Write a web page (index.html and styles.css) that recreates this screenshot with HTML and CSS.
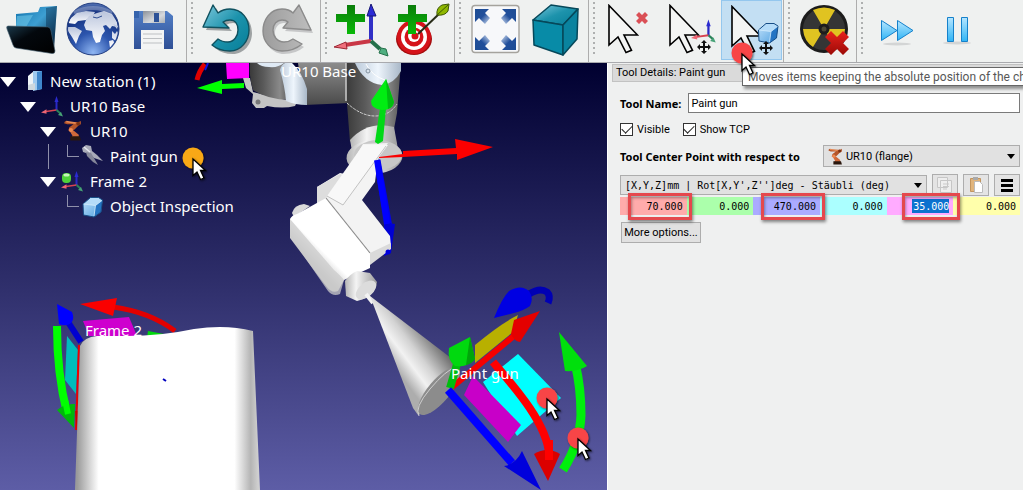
FILE: index.html
```
<!DOCTYPE html>
<html lang="en">
<head>
<meta charset="utf-8">
<title>Station editor</title>
<link rel="stylesheet" href="styles.css">
</head>
<body>
<svg class="defs" aria-hidden="true">
  <defs>
    <linearGradient id="gSky" x1="0" y1="0" x2="0" y2="1"><stop offset="0" stop-color="#000030"/><stop offset=".5" stop-color="#2d2d69"/><stop offset="1" stop-color="#5d5da6"/></linearGradient>
    <linearGradient id="gFolder" x1="0" y1="0" x2="1" y2="1"><stop offset="0" stop-color="#1273ad"/><stop offset=".45" stop-color="#3d9fd2"/><stop offset="1" stop-color="#052038"/></linearGradient>
    <linearGradient id="gFront" x1="0" y1="0" x2="1" y2="1"><stop offset="0" stop-color="#1b3a4c"/><stop offset=".4" stop-color="#03080d"/><stop offset="1" stop-color="#000"/></linearGradient>
    <radialGradient id="gGlobe" cx=".5" cy=".95" r=".95"><stop offset="0" stop-color="#8fb6f2"/><stop offset=".4" stop-color="#2c55ad"/><stop offset=".8" stop-color="#15327f"/><stop offset="1" stop-color="#5272b4"/></radialGradient>
    <linearGradient id="gLand" x1="0" y1="0" x2="0" y2="1"><stop offset="0" stop-color="#b9c4dc"/><stop offset="1" stop-color="#fff"/></linearGradient>
    <linearGradient id="gDisk" x1="0" y1="0" x2="0" y2="1"><stop offset="0" stop-color="#527fc6"/><stop offset="1" stop-color="#2f5096"/></linearGradient>
    <linearGradient id="gMetal" x1="0" y1="0" x2="1" y2="1"><stop offset="0" stop-color="#8b9098"/><stop offset=".6" stop-color="#d6d9dd"/><stop offset="1" stop-color="#aaafb5"/></linearGradient>
    <linearGradient id="gTeal" x1="0" y1="0" x2="1" y2="1"><stop offset="0" stop-color="#7cc7dc"/><stop offset=".5" stop-color="#1d93ac"/><stop offset="1" stop-color="#067e98"/></linearGradient>
    <linearGradient id="gGray" x1="0" y1="0" x2="1" y2="0"><stop offset="0" stop-color="#9c9c9c"/><stop offset="1" stop-color="#bdbdbd"/></linearGradient>
    <linearGradient id="gPlus" x1="0" y1="0" x2="0" y2="1"><stop offset="0" stop-color="#0a7d0a"/><stop offset="1" stop-color="#08b908"/></linearGradient>
    <linearGradient id="gBlueUp" x1="0" y1="0" x2="1" y2="1"><stop offset="0" stop-color="#1d4c93"/><stop offset=".5" stop-color="#214f9b"/><stop offset="1" stop-color="#d9e4f5"/></linearGradient>
    <linearGradient id="gCube" x1="0" y1="0" x2="1" y2="1"><stop offset="0" stop-color="#c3e3fb"/><stop offset="1" stop-color="#4d9fe0"/></linearGradient>
    <linearGradient id="gPlay" x1="0" y1="0" x2="0" y2="1"><stop offset="0" stop-color="#b7e6ff"/><stop offset="1" stop-color="#2fb4f5"/></linearGradient>
    <linearGradient id="gRedX" x1="0" y1="0" x2="0" y2="1"><stop offset="0" stop-color="#e8221d"/><stop offset="1" stop-color="#9b0a06"/></linearGradient>
    <linearGradient id="gArm" x1="0" y1="0" x2="1" y2="0"><stop offset="0" stop-color="#3a3a3a"/><stop offset=".35" stop-color="#5b5b5b"/><stop offset=".75" stop-color="#8a8a8a"/><stop offset="1" stop-color="#565656"/></linearGradient>
    <linearGradient id="gArmH" x1="0" y1="0" x2="0" y2="1"><stop offset="0" stop-color="#8c8c8c"/><stop offset="1" stop-color="#4a4a4a"/></linearGradient>
    <linearGradient id="gRing" x1="0" y1="0" x2="1" y2="0"><stop offset="0" stop-color="#bccbdb"/><stop offset=".5" stop-color="#eef5fc"/><stop offset="1" stop-color="#a9b8c8"/></linearGradient>
    <linearGradient id="gFlange" x1="0" y1="0" x2="1" y2="0"><stop offset="0" stop-color="#b5b5b5"/><stop offset=".35" stop-color="#f4f4f4"/><stop offset="1" stop-color="#9c9c9c"/></linearGradient>
    <linearGradient id="gBox" gradientUnits="userSpaceOnUse" x1="310" y1="262" x2="322" y2="250"><stop offset="0" stop-color="#c2c2c2"/><stop offset="1" stop-color="#fff"/></linearGradient>
    <linearGradient id="gCone" gradientUnits="userSpaceOnUse" x1="400" y1="375" x2="440" y2="345"><stop offset="0" stop-color="#adadad"/><stop offset=".3" stop-color="#f2f2f2"/><stop offset=".55" stop-color="#d2d2d2"/><stop offset="1" stop-color="#6d6d6d"/></linearGradient>
    <linearGradient id="gBody" gradientUnits="userSpaceOnUse" x1="77" y1="0" x2="258" y2="0"><stop offset="0" stop-color="#9a9a9a"/><stop offset=".12" stop-color="#fff"/><stop offset=".87" stop-color="#fff"/><stop offset=".96" stop-color="#b4b4b4"/><stop offset="1" stop-color="#cfcfcf"/></linearGradient>
    <filter id="soft" x="-50%" y="-50%" width="200%" height="200%"><feDropShadow dx="1" dy="1" stdDeviation="1" flood-opacity=".6"/></filter>
    <clipPath id="land"><circle cx="93" cy="29" r="25"/></clipPath>
    <symbol id="pick" viewBox="0 0 34 40" overflow="visible">
      <circle cx="13" cy="13" r="10.5" filter="url(#soft)"/>
      <path d="M13 14v16.500l4-3.500 3.500 7.500 3.500-1.500-3.500-7.500h5z" fill="#fff" stroke="#000" stroke-width="1.300" filter="url(#soft)"/>
    </symbol>
    <symbol id="arrow" viewBox="0 0 32 50"><path d="M2 1.500V41l9-8 8 15.500 5.500-2.200L17 31H30.500z" fill="#f4f5f4" stroke="#000" stroke-width="1.600"/></symbol>
    <symbol id="move" viewBox="0 0 14 14"><path d="M7 0l3 3H8v3h3V4l3 3-3 3V8H8v3h2l-3 3-3-3h2V8H3v2L0 7l3-3v2h3V3H4z" fill="#111"/></symbol>
    <symbol id="axes" viewBox="0 0 24 24"><path d="M15.500 14V5" stroke="#2929c4" stroke-width="2"/><path d="M15.500 0l2 6h-4z" fill="#2b2bd0"/><path d="M15.500 14L5 15.500" stroke="#d84352" stroke-width="1.600"/><path d="M0 16.500l5.500-3.200v4.500z" fill="#ee6674"/><path d="M15.500 14l4 3.500" stroke="#2b8159" stroke-width="2"/><path d="M22 20.500l-5-1.500 3-3z" fill="#46a276"/></symbol>
    <symbol id="robot" viewBox="0 0 17 20"><path d="M1 1l2 1h11l2-1v3l-2 1-4 4-3 2-3-1 1-3 4-3H3L0 3z" fill="#b5552a"/><path d="M2 1.500l9 1.500" stroke="#e68a55" stroke-width="1.500"/><path d="M5 10l4 0 5 4 0 3H7l1-2z" fill="#d0693a"/><circle cx="6.500" cy="9.500" r="2" fill="#ee8a52"/><circle cx="13.500" cy="3.500" r="1.800" fill="#7c3213"/><path d="M6 15.500h9l1 4H6z" fill="#2a170e"/></symbol>
    <symbol id="cube" viewBox="0 0 22 22"><path d="M1.500 8L9 1.500h8l4 2.500-1.500 12-7 5L2 19z" fill="url(#gCube)"/><path d="M14 9.500l7-5.500-1.500 12-7 5z" fill="#2474c3"/><path d="M2 8l7-6h8l3.500 2L14 9.500z" fill="#b5dcf9"/><path d="M1.500 8L9 1.500h8l4 2.500-1.500 12-7 5L2 19z" fill="none" stroke="#174d86"/><path d="M2 8l12 1.500 6.500-5M14 9.500L12.500 20" stroke="#d4ecfd" stroke-width=".8" fill="none"/></symbol>
    <symbol id="cross" viewBox="0 0 12 12"><path d="M3 0l3 3 3-3 3 3-3 3 3 3-3 3-3-3-3 3-3-3 3-3-3-3z"/></symbol>
  </defs>
</svg>
<div class="app">
  <header class="toolbar">
    <div class="group group-first">
      <button class="tool" aria-label="Open"><svg viewBox="2 0 61 60"><path d="M16 14l22-2 2-5 17-1-3 42-38-6z" fill="url(#gFolder)"/><path d="M17 16l16-1-7 12H16z" fill="#6cc6e8" opacity=".6"/><path d="M46 8l11-2-3 42-8-4z" fill="#031f3c" opacity=".4"/><path d="M8 26l40 1q3 1 3 4l4 20q0 3-3 2.500L16 48q-2 0-3-3L7 29q-1-3 1-3z" fill="url(#gFront)" stroke="#456070" stroke-width=".6"/></svg></button>
      <button class="tool" aria-label="Online library"><svg viewBox="63 0 61 60"><circle cx="93" cy="29" r="26" fill="url(#gGlobe)" stroke="#243f82"/><g clip-path="url(#land)" fill="url(#gLand)"><path d="M71 18l6-5 9-2 9 1-2 4-7 4-8 1-3 3-7-1z"/><path d="M67 27l8 0 7 4-3 5-3 8-4-7-4-6z"/><path d="M86 20l3-4 8-3 7-2 8 3 5 8 1 5-6-1-2 3-4-4-3 1 2 5-3 4-2 7-4 1-3-6-1-6-6-1-2-5z"/><path d="M112 31l3 3 2-3 2 3-2 8-5-4zM109 41l4-1 2 4-5 4zM113 24l5 2-1 3z"/></g><path d="M93 17l4 1 5-2" stroke="#2c4c91" fill="none"/><path d="M74 13q19-10 38 0" stroke="#fff" stroke-width="4" opacity=".25" fill="none"/></svg></button>
      <button class="tool" aria-label="Save"><svg viewBox="124 0 61 60"><path d="M134 11h33l6 5v33h-39z" fill="url(#gDisk)"/><path d="M134 11h5v7h-5z" fill="#3564ad"/><path d="M143 11h22v12h-22z" fill="url(#gMetal)"/><path d="M154 13h5v9h-5z" fill="#2c5197"/><path d="M141 30h23v19h-23z" fill="#f3f4f4"/><path d="M143 34h19M143 38.500h19M143 43h19" stroke="#bdc0c3"/></svg></button>
    </div>
    <div class="group">
      <button class="tool" aria-label="Undo"><svg viewBox="197 0 61 60"><path d="M213 5l5 8q5-4 12-4c12 0 19 10 19 21s-8 21-19 21q-11 0-18-6l6-6q4 3 10 3c6 0 10-6 10-12s-3-10-8-10q-4 0-7 2l6 6-26-1z" fill="#8a8e90" opacity=".8" transform="translate(3 3)"/><path d="M213 5l5 8q5-4 12-4c12 0 19 10 19 21s-8 21-19 21q-11 0-18-6l6-6q4 3 10 3c6 0 10-6 10-12s-3-10-8-10q-4 0-7 2l6 6-26-1z" fill="url(#gTeal)" stroke="#10515f" stroke-width="1.400" stroke-linejoin="round"/></svg></button>
      <button class="tool" aria-label="Redo"><svg viewBox="258 0 61 60"><path d="M299 5l-6 8q-4-4-11-4c-12 0-19 11-19 22s8 20 19 20q12 0 20-7l-9-5q-4 3-9 3c-7 0-11-6-11-12s4-10 9-10q4 0 6 2l-5 6 28 2z" fill="#bbbdbe" opacity=".8" transform="translate(2 3)"/><path d="M299 5l-6 8q-4-4-11-4c-12 0-19 11-19 22s8 20 19 20q12 0 20-7l-9-5q-4 3-9 3c-7 0-11-6-11-12s4-10 9-10q4 0 6 2l-5 6 28 2z" fill="url(#gGray)" stroke="#8b8b8b" stroke-width="1.400" stroke-linejoin="round"/></svg></button>
    </div>
    <div class="group">
      <button class="tool" aria-label="Add reference frame"><svg viewBox="331 0 61 60"><path d="M371 40V16" stroke="#3030c6" stroke-width="4"/><path d="M371 4l5 12h-9z" fill="#2b2bd6" stroke="#181876"/><path d="M371 41l-26 4" stroke="#c93746" stroke-width="4"/><path d="M334 47l12-5 1 7z" fill="#f0707c" stroke="#9b2632"/><path d="M371 41l9 8" stroke="#24714a" stroke-width="4"/><path d="M388 56l-9-3 2-5 5 1z" fill="#4fae80" stroke="#24714a"/><path d="M347 5h8v9h10v8h-10v12h-8V22h-11v-8h11z" fill="url(#gPlus)"/></svg></button>
      <button class="tool" aria-label="Add target"><svg viewBox="392 0 61 60"><ellipse cx="414" cy="39" rx="18" ry="16" fill="#a40d0d"/><circle cx="414" cy="37" r="17" fill="#d5131a"/><circle cx="414" cy="37" r="13" fill="#fff"/><circle cx="414" cy="37" r="9.500" fill="#d5131a"/><circle cx="414" cy="36" r="6" fill="#fff"/><circle cx="415" cy="36" r="3.500" fill="#d5131a"/><path d="M418 34l22-21" stroke="#282c18" stroke-width="2"/><path d="M437 15q-1-7 5-10l7-1-1 7q-3 5-11 4z" fill="#8fb800" stroke="#3e5804"/><path d="M437 15l11-10" stroke="#3e5804"/><path d="M408 5h8v9h11v8h-11v12h-8V22h-10v-8h10z" fill="url(#gPlus)"/></svg></button>
    </div>
    <div class="group">
      <button class="tool" aria-label="Fit all"><svg viewBox="465 0 61 60"><rect x="472" y="5.500" width="47" height="47" rx="3" fill="#f7f8fa" stroke="#a5a39d" stroke-width="1.400"/><g id="corner"><path d="M475 9h14l-4 4 5 5-5 6-6-6-4 4z" fill="url(#gBlueUp)"/></g><use href="#corner" transform="matrix(-1 0 0 1 991 0)"/><use href="#corner" transform="matrix(1 0 0 -1 0 59)"/><use href="#corner" transform="matrix(-1 0 0 -1 991 59)"/></svg></button>
      <button class="tool" aria-label="Isometric view"><svg viewBox="526 0 61 60"><g stroke="#06485a" stroke-width="1.500" stroke-linejoin="round"><path d="M533 20l18-15 27 4-15 16z" fill="url(#gTeal)"/><path d="M533 20l30 5v30l-29-10z" fill="#088ba7"/><path d="M563 25l15-16-1 30-14 16z" fill="#0a839f"/></g></svg></button>
    </div>
    <div class="group">
      <button class="tool" aria-label="Select none"><svg viewBox="599 0 61 60"><use href="#arrow" x="607" y="4" width="32" height="50"/><use href="#cross" x="636" y="12" width="12" height="12" fill="#da5056"/></svg></button>
      <button class="tool" aria-label="Move reference frame"><svg viewBox="660 0 61 60"><use href="#arrow" x="668" y="4" width="32" height="50"/><use href="#axes" x="691" y="19" width="27" height="28"/><use href="#move" x="697" y="40" width="14" height="14"/></svg></button>
      <button class="tool tool-active" aria-label="Move object" aria-describedby="tip"><svg viewBox="721 0 61 60"><use href="#arrow" x="730" y="5" width="32" height="50"/><use href="#cube" x="757" y="22" width="22" height="22"/><use href="#move" x="759" y="41" width="14" height="14"/></svg></button>
    </div>
    <div class="group">
      <button class="tool" aria-label="Disable collision checking"><svg viewBox="794 0 61 60"><circle cx="824" cy="29" r="24" fill="#1c1c1c"/><circle cx="824" cy="29" r="21" fill="#353535"/><path d="M824 29L813 10q11-5 22 0zM824 29h-21q1 12 10 18zM824 29h21q-1 12-10 18z" fill="#e0c321"/><circle cx="824" cy="29" r="5.500" fill="#1c1c1c"/><circle cx="824" cy="29" r="2.500" fill="#4b4835"/><use href="#cross" x="825" y="31" width="24" height="24" fill="url(#gRedX)"/></svg></button>
    </div>
    <div class="group group-last">
      <button class="tool" aria-label="Fast simulation"><svg viewBox="867 0 61 60"><ellipse cx="897" cy="44" rx="14" ry="1.500" fill="#d3d5d5"/><g fill="url(#gPlay)" stroke="#1581cb"><path d="M881.500 20.500L897 30.500l-15.500 10z"/><path d="M897.500 20.500l15.500 10-15.500 10z"/></g></svg></button>
      <button class="tool" aria-label="Pause"><svg viewBox="928 0 61 60"><ellipse cx="957" cy="43" rx="14" ry="1.500" fill="#d3d5d5"/><g fill="url(#gPlay)" stroke="#1581cb"><path d="M947.500 17.500h6v24h-6zM961.500 17.500h6v24h-6z"/></g></svg></button>
    </div>
  </header>

  <main class="workspace">
    <section class="viewport">
      <svg class="scene" viewBox="0 63 607 427" preserveAspectRatio="xMinYMin slice" role="img" aria-label="3D view of the station">
        <rect x="0" y="63" width="607" height="427" fill="url(#gSky)"/>
        <!-- robot base frame -->
        <path d="M197 80q2-9 8-16" stroke="#e00000" stroke-width="5" fill="none"/><path d="M205 70l3-7" stroke="#1212e0" stroke-width="2"/>
        <path d="M226 63h23v15l-22 1z" fill="#f0f"/>
        <path d="M197 88l25-8v4l22-1v5l-22 1v5z" fill="#0f0"/>
        <!-- robot arm -->
        <path d="M243 78h7l3 14 24 6 20 4-2 4q-12 3-28 0l-3 2h-8l-4-5 1-9-7-6z" fill="#c4c4c4"/><circle cx="258" cy="102" r="2.500" fill="#777"/>
        <path d="M250 63h38l2 37q-24-1-37-10-4-12-3-27z" fill="url(#gArm)"/>
        <path d="M257 63h27q-6 5-15 4-8 0-12-4z" fill="#dfeaf5"/>
        <path d="M298 63h52v40l-46 2z" fill="url(#gArmH)"/>
        <path d="M280 70q1-5 5-7h7q10 9 15 26l0 16q-12 0-21-4-1-14-6-31z" fill="url(#gRing)"/>
        <path d="M346 63h55l-4 50-3 16q-18-8-44 13l-3-38z" fill="url(#gArm)"/>
        <path d="M347 103q14 13 28 13 14 0 22-12" stroke="#d0d0d0" fill="none" stroke-width="1" stroke-dasharray="3 1"/>
        <path d="M346 63v38" stroke="#c8c8c8" stroke-width="1.500"/>
        <path d="M355 63h46v8q-7 13-19 14-18-2-27-22z" fill="url(#gRing)"/><path d="M366 64q6 12 19 16" stroke="#fff" fill="none"/>
        <path d="M350 140q18-20 44-13l4 22-46 2z" fill="url(#gFlange)"/>
        <ellipse cx="374.500" cy="157" rx="28" ry="17" fill="url(#gFlange)" transform="rotate(-3 374 157)"/>
        <ellipse cx="378" cy="155" rx="24" ry="15" fill="#c7c7c7"/>
        <path d="M377 160l12 67" stroke="#00e" stroke-width="7"/>
        <path d="M384 222l11 2-4 29-7 3z" fill="#0000d4"/>
        <!-- tool body -->
        <path d="M378 158l-3 24-13 18 28 36 1 10-21 18-53-54v-23l23-14 5 1 18-30 25-1z" fill="#f3f3f3"/>
        <path d="M317 187l23-13 4 2-18 22-9 10z" fill="#ddd"/>
        <path d="M363 145h25l-45 60-16-9z" fill="#f8f8f8"/><path d="M386 146l-43 59-16-9" fill="none" stroke="#aaa" stroke-width=".7"/>
        <path d="M292 213q2-8 12-9l6 2-16 11z" fill="#dadada"/>
        <path d="M290 219q2-4 7-5l29-16 44 54v16l-26 12-6 11q-6 3-12-5l-36-48z" fill="url(#gBox)"/>
        <path d="M290 219l44 51q8 7 10 10l-4 14q-7 3-12-3l-38-55z" fill="#cbcbcb" opacity=".75"/>
        <path d="M326 198l44 55" stroke="#8b8b8b" stroke-width="1.200"/><path d="M370 253l21-10v6l-21 16z" fill="#dadada"/>
        <circle cx="388" cy="252" r="2.500" fill="#00d"/>
        <path d="M345 281q5-7 12-10l13 2 7 9q-2 15-20 19l-11-5z" fill="url(#gFlange)"/><ellipse cx="366" cy="290" rx="12" ry="7" fill="#dcdcdc" transform="rotate(-40 366 290)"/>
        <path d="M366 294l7 9" stroke="#f3f3f3" stroke-width="4"/>
        <!-- spray cone -->
        <path d="M370 296l81 62 8 12-30 40-11 5-5-7z" fill="url(#gCone)"/>
        <ellipse cx="439" cy="391" rx="30" ry="11" fill="#8c8c8c" transform="rotate(-50 439 391)"/>
        <path d="M419 416q-5-8 11-27t26-22" fill="none" stroke="#cfcfcf" stroke-width="1"/>
        <!-- robot flange frame -->
        <path d="M379 157l24-3v-3l53-3-1-9 38 8-36 13v-6l-54 3-24 1z" fill="#fa0000"/>
        <path d="M377 160l10 64" stroke="#00f" stroke-width="6"/><path d="M375 142l5-34h6l-3 33-5 3z" fill="#00d916"/>
        <path d="M386 79l8 23q-1 8-12 8-11-1-11-9z" fill="#00ed12"/><path d="M386 79l8 23q-1 5-6 7z" fill="#00bc10"/>
        <!-- tool frame -->
        <path d="M518 315l-5 17-38 31v-18q25-21 43-30z" fill="#b8b000"/>
        <path d="M483 382l35-28 43 44-44 38z" fill="#0ff"/>
        <path d="M473 376l48 49-13 17-44-47z" fill="#c800c8"/>
        <path d="M451 388l64-53" stroke="#f40000" stroke-width="6"/><path d="M540 311l-20 31q-6-1-9-8l3-14z" fill="#e40000"/>
        <path d="M450 388l7-24" stroke="#00bd0e" stroke-width="8"/><path d="M470 337l5 22q-9 9-20 7-8-6-6-18z" fill="#00d90f"/><path d="M470 337l5 22q-3 5-9 6z" fill="#00a60a"/>
        <path d="M448 390l64 73" stroke="#00f" stroke-width="8"/><path d="M541 490l-37-24q12-2 18-15z" fill="#0000dc"/>
        <path d="M529 294q11-7 18-2 4 4 1 11" fill="none" stroke="#0000b4" stroke-width="7"/><path d="M494 318q8-20 15-27 12-7 20 0 5 7 1 15-7 5-16 7z" fill="#0000e2"/>
        <path d="M493 362c17 20 54 60 56 92" fill="none" stroke="#f00" stroke-width="8"/><path d="M534 454q13-8 26 0l-12 27z" fill="#db0000"/><path d="M549 440v20" stroke="#f00" stroke-width="8"/>
        <path d="M563 470q17-27 18-55 0-28-6-52" fill="none" stroke="#00f00c" stroke-width="9"/><path d="M559 332l28 34q-9 6-22 5z" fill="#00df0c"/>
        <!-- part and its frame -->
        <path d="M83 321l46-4 8 19H89z" fill="#ce00ce"/><path d="M148 331l16 3v4h-17z" fill="#00d80c"/>
        <path d="M175 331q-25-19-62-24" fill="none" stroke="#e20000" stroke-width="5"/><path d="M80 304l37-6-4 18z" fill="#fa0000"/>
        <path d="M67 336l11 14-2 44-11-14z" fill="#00bcbc"/><path d="M79 345l-3 85" stroke="#e00" stroke-width="2"/><path d="M75 411h4l-2 20z" fill="#c00"/>
        <path d="M57 326q0 48 10 87" fill="none" stroke="#0f0" stroke-width="8"/><path d="M57 410q8-7 18-6l-1 24z" fill="#00b80c"/><path d="M65 400l3 14" stroke="#0f0" stroke-width="6"/>
        <path d="M68 322l13 20" stroke="#0000d0" stroke-width="6"/><path d="M57 304l15 8q3 7-1 11-5 4-12 1z" fill="#00f"/>
        <path d="M80 346q4-9 17-10h30q34 0 67-7 32-5 59 2l7 159H75z" fill="url(#gBody)"/>
        <path d="M163 379l3 2" stroke="#0000c0" stroke-width="2"/>
        <g class="scene-label"><text x="281" y="77">UR10 Base</text><text x="85" y="336">Frame 2</text><text x="451" y="379">Paint gun</text></g>
        <circle cx="368" cy="71" r="2" fill="none" stroke="#8291a0"/>
        <use href="#pick" x="534" y="385" width="34" height="40" fill="#f84446"/>
        <use href="#pick" x="565" y="425" width="34" height="40" fill="#f84446"/>
      </svg>

      <ul class="tree">
        <li class="row"><span class="slot"><i class="caret"></i></span><svg class="ticon" viewBox="20 69 24 24"><path d="M28 75l6-5 2 16-8 3z" fill="#eef3f7"/><path d="M33 70h9v18l-9 2z" fill="#9fcaf0"/><path d="M37 71l5-1v18l-5 1z" fill="#3f86cb"/><path d="M28 84l7-2v7h-7z" fill="#cfd8de"/></svg>New station (1)</li>
        <li class="row level-1"><span class="slot"><i class="caret"></i></span><svg class="ticon" viewBox="0 0 24 24"><use href="#axes" x="1" y="1" width="24" height="24"/></svg>UR10 Base</li>
        <li class="row level-2"><span class="slot"><i class="caret"></i></span><svg class="ticon" viewBox="0 0 24 24"><use href="#robot" x="4" y="0" width="18" height="21"/></svg>UR10</li>
        <li class="row level-3"><i class="guide"></i><span class="slot"><i class="branch"></i></span><svg class="ticon" viewBox="80 144 24 24"><path d="M82 147l4-3 5 1 1 5 5 4 6 6-9-3-5-4-6-2z" fill="#a9abb9"/><path d="M86 151l5 1 3 5 4 7-5-3-6-6z" fill="#858799"/><path d="M84 146l6 5" stroke="#e4e5ee" stroke-width="1.500"/></svg>Paint gun<svg class="marker" viewBox="0 0 34 40"><use href="#pick" width="34" height="40" fill="#f9a812"/></svg></li>
        <li class="row level-2"><span class="slot"><i class="caret"></i></span><svg class="ticon" viewBox="0 0 24 24"><use href="#axes" x="1" y="1" width="24" height="24"/><rect x="2" y="3" width="9" height="10" rx="4" fill="#4fd33a"/><ellipse cx="6.500" cy="5" rx="3" ry="1.500" fill="#c6f5bb"/></svg>Frame 2</li>
        <li class="row level-3"><span class="slot"><i class="branch"></i></span><svg class="ticon" viewBox="0 0 24 24"><use href="#cube" x="1" y="1" width="23" height="22"/></svg>Object Inspection</li>
      </ul>
    </section>

    <aside class="panel">
      <h2 class="panel-title">Tool Details: Paint gun</h2>
      <form class="form">
        <div class="line name-line"><label class="strong" for="name">Tool Name:</label><input class="text" id="name" type="text" value="Paint gun"></div>
        <div class="line checks">
          <label class="check"><input type="checkbox" checked>Visible</label>
          <label class="check"><input type="checkbox" checked>Show TCP</label>
        </div>
        <div class="line tcp-line"><label class="strong" for="flange">Tool Center Point with respect to</label>
          <span class="combo combo-flange"><select id="flange"><option>UR10 (flange)</option></select><svg viewBox="0 0 17 20"><use href="#robot" width="17" height="20"/></svg></span></div>
        <div class="line pose-line">
          <span class="combo combo-pose"><select aria-label="Pose format"><option>[X,Y,Z]mm | Rot[X,Y',Z'']deg - Stäubli (deg)</option></select></span>
          <button type="button" class="small" aria-label="Copy"><svg viewBox="0 0 20 18"><g fill="#eee" stroke="#c6c6c6"><path d="M2.500 1.500h10v10h-10zM5.500 4.500h11v12h-11z"/></g><path d="M8 8h6M8 10.500h6M8 13h4" stroke="#c9c9c9"/></svg></button>
          <button type="button" class="small" aria-label="Paste"><svg viewBox="0 0 20 18"><path d="M4.500 2.500h10v13h-10z" fill="#e0b47c" stroke="#c2955f"/><path d="M7 1h5v3H7z" fill="#aaa"/><path d="M8.500 5.500h5l3 3v8h-8z" fill="#fff" stroke="#bbb"/></svg></button>
          <button type="button" class="small" aria-label="Menu"><svg viewBox="0 0 20 18"><path d="M4 4.500h12M4 9.500h12M4 14.500h12" stroke="#000" stroke-width="3"/></svg></button>
        </div>
        <div class="pose">
          <span class="cell x framed"><input aria-label="X" value="70.000"></span>
          <span class="cell y"><input aria-label="Y" value="0.000"></span>
          <span class="cell z framed"><input aria-label="Z" value="470.000"></span>
          <span class="cell rx"><input aria-label="Rotation X" value="0.000"></span>
          <span class="cell ry framed"><input class="selected" aria-label="Rotation Y" value="35.000"></span>
          <span class="cell rz"><input aria-label="Rotation Z" value="0.000"></span>
        </div>
        <button type="button" class="more">More options...</button>
      </form>
    </aside>
  </main>
  <div class="tooltip" id="tip" role="tooltip">Moves items keeping the absolute position of the ch</div>
  <svg class="pointer" viewBox="0 0 34 40"><use href="#pick" width="34" height="40" fill="#f84446"/></svg>
</div>
</body>
</html>
```
FILE: styles.css
```
* { box-sizing: border-box; }
body { margin: 0; overflow: hidden; font-family: Roboto, "Noto Sans", sans-serif; font-size: 11px; color: #000; background: #eff0f0; }
.defs { position: absolute; width: 0; height: 0; }
.app { position: relative; display: flex; flex-direction: column; min-height: 100vh; }

.toolbar { display: flex; min-height: 63px; border-bottom: 1px solid #a9aaae; background: #eff1f0; }
.group { position: relative; display: flex; align-items: flex-start; padding: 0 1px 0 10px; border-right: 1px solid #adadad; }
.group::before { content: ""; position: absolute; left: 4px; top: 2px; bottom: 6px; width: 2px; background: repeating-linear-gradient(#aeb0b0 0 2px, #eff1f0 2px 5px); }
.group-first { padding-left: 2px; }
.group-first::before { display: none; }
.group-last { border-right: 0; }
.tool { display: block; width: 61px; height: 60px; padding: 0; border: 0; background: none; }
.tool svg { display: block; width: 61px; height: 60px; }
.tool-active { background: #c3dff3; box-shadow: inset 0 0 0 1px #94c7ee; }

.workspace { flex: 1; display: flex; }
.viewport { position: relative; flex: 1; min-width: 0; background: #5d5da6; }
.scene { position: absolute; inset: 0; width: 100%; height: 100%; }
.scene-label { font: 15px "Noto Sans", sans-serif; fill: #fff; }

.tree { position: absolute; left: 0; top: 6px; margin: 0; padding: 0; list-style: none; color: #fff; font: 15px/25px "Noto Sans", sans-serif; }
.row { position: relative; display: flex; align-items: center; height: 25px; white-space: nowrap; }
.level-1 { padding-left: 20px; }
.level-2 { padding-left: 40px; }
.level-3 { padding-left: 60px; }
.slot { width: 20px; height: 25px; display: flex; align-items: center; }
.caret { border: 8px solid transparent; border-top: 10px solid #fff; border-bottom: 0; }
.branch { width: 12px; height: 12px; margin: 0 0 12px 7px; border: solid #8f90aa; border-width: 0 0 1px 1px; }
.guide { position: absolute; left: 48px; top: 0; height: 25px; border-left: 1px solid #8f90aa; }
.ticon { width: 24px; height: 24px; margin-right: 6px; }
.marker { position: absolute; left: 180px; top: 1px; width: 34px; height: 40px; overflow: visible; }

.panel { width: 416px; padding: 1px 0 0 4px; border-left: 1px solid #fff; background: #eff0f0; }
.panel-title { margin: 0; padding: 0 3px; border: 1px solid #c2c2c2; border-right: 0; background: #dadada; font-size: 11px; font-weight: 400; line-height: 16px; }
.form { padding: 11px 3px 0 8px; }
.line { display: flex; align-items: center; }
.strong { font-family: "Noto Sans", sans-serif; font-weight: 700; white-space: nowrap; }
input, select, button { font: inherit; color: inherit; margin: 0; border-radius: 0; }
.name-line { gap: 7px; }
.text { flex: 1; min-width: 0; height: 20px; padding: 0 2px; border: 1px solid #7a7a7a; background: #fff; }
.checks { gap: 13px; height: 32px; }
.check { display: flex; align-items: center; gap: 4px; }
.check input { appearance: none; display: grid; place-items: center; width: 13px; height: 13px; border: 1px solid #333; background: #fff; }
.check input::after { content: ""; width: 9px; height: 5px; border: solid #222; border-width: 0 0 1px 1px; transform: translateY(-1px) rotate(-45deg); }
.tcp-line { gap: 23px; }
.combo { position: relative; display: flex; flex: 1; min-width: 0; }
.combo select { flex: 1; min-width: 0; appearance: none; border: 1px solid #adadad; background: #e1e1e1; outline: 0; }
.combo::after { content: ""; position: absolute; right: 5px; top: 50%; margin-top: -2px; border: 4px solid transparent; border-top: 5px solid #000; border-bottom: 0; }
.combo-flange select { height: 22px; padding: 0 20px 0 22px; }
.combo-flange svg { position: absolute; left: 5px; top: 3px; width: 15px; height: 17px; }
.pose-line { gap: 5px; height: 22px; margin-top: 7px; }
.combo-pose select { height: 20px; padding: 0 16px 0 4px; font: 10px "DejaVu Sans Mono", monospace; }
.small { display: grid; place-items: center; width: 26px; height: 22px; padding: 0; border: 1px solid #adadad; background: #e4e4e4; }
.small svg { width: 20px; height: 18px; }
.pose { display: grid; grid-template-columns: repeat(6, 1fr); margin-top: 1px; }
.cell { position: relative; display: flex; justify-content: flex-end; align-items: center; height: 18px; padding-right: 4px; }
.cell input { width: 100%; height: 14px; padding: 0; border: 0; background: none; text-align: right; font: 10px "DejaVu Sans Mono", monospace; }
.cell .selected { width: 37px; background: #0c72cf; color: #fff; }
.x { background: #ffabab; }
.y { background: #abffab; }
.z { background: #ababff; }
.rx { background: #abffff; }
.ry { background: #ffabff; }
.rz { background: #ffffab; }
.framed::after { content: ""; position: absolute; inset: -4px -5px -5px 8px; border: 3px solid #e5484d; box-shadow: 1px 2px 3px #0007, inset 1px 2px 3px #0005; z-index: 1; pointer-events: none; }
.ry.framed::after { left: 15px; right: -7px; }
.more { display: block; min-width: 80px; height: 21px; margin: 7px 0 0 1px; padding: 0 2px; border: 1px solid #adadad; background: #e1e1e1; white-space: nowrap; }

.tooltip { position: absolute; left: 742px; right: 0; top: 67px; height: 19px; padding-left: 5px; overflow: hidden; border: 1px solid #666; border-right: 0; background: #fff; color: #575757; font-size: 12px; line-height: 18px; white-space: nowrap; box-shadow: 2px 3px 3px #0006; }
.pointer { position: absolute; left: 729px; top: 40px; width: 34px; height: 40px; overflow: visible; }
```
